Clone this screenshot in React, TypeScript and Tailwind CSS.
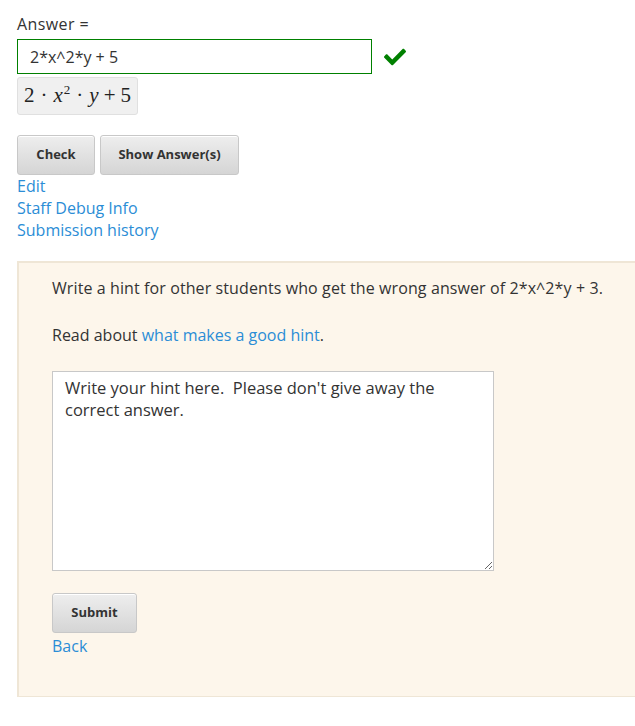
import { FaCheck } from "react-icons/fa";

const links = ["Edit", "Staff Debug Info", "Submission history"];

function GrayButton({ label, className = "" }: { label: string; className?: string }) {
  return (
    <button
      className={`h-10 rounded-[3px] border border-[#c8c8c8] bg-gradient-to-b from-[#eeeeee] to-[#d5d5d5] text-[13px] font-bold text-[#333] shadow-[inset_0_1px_0_#fff] ${className}`}
    >
      {label}
    </button>
  );
}

export default function App() {
  return (
    <div className="min-h-[726px] bg-white pt-[14px] font-['Open_Sans',sans-serif] text-[#333]">
      <div className="pl-[17px]">
        {/* Answer input */}
        <div className="text-[16px] leading-5 tracking-[0.4px]">Answer =</div>
        <div className="mt-[5px] flex items-center">
          <div className="flex h-[35px] w-[355px] items-center border border-[#008000] px-[12px] text-[16px]">
            2*x^2*y + 5
          </div>
          <FaCheck className="ml-[12px] text-[22px] text-[#008000]" />
        </div>
        <div className="mt-[3px] inline-flex h-[38px] items-center rounded-[3px] border border-[#e0e0e0] bg-[#f0f0f0] px-[6px] font-['Liberation_Serif',serif] text-[21px] text-[#222]">
          2<span className="mx-[6px]">·</span>
          <i>x</i>
          <sup className="ml-[1px] text-[13px] not-italic">2</sup>
          <span className="mx-[6px]">·</span>
          <i>y</i>
          <span className="mx-[5px]">+</span>5
        </div>

        {/* Actions */}
        <div className="mt-[20px] flex gap-[5px]">
          <GrayButton label="Check" className="w-[78px]" />
          <GrayButton label="Show Answer(s)" className="w-[139px]" />
        </div>
        <div className="flex flex-col text-[16px] leading-[22px] text-[#2b8dd6]">
          {links.map((l) => (
            <a key={l} href="#" className="w-fit">
              {l}
            </a>
          ))}
        </div>
      </div>

      {/* Hint panel */}
      <div className="ml-[17px] mt-[20px] h-[436px] border-l-2 border-t-2 border-b border-[#efe6d6] bg-[#fdf6eb] pl-[33px] pt-[14px]">
        <p className="text-[16px] leading-[22px] tracking-[0.1px]">
          Write a hint for other students who get the wrong answer of 2*x^2*y + 3.
        </p>
        <p className="mt-[25px] text-[16px] leading-[22px]">
          Read about <a href="#" className="text-[#2b8dd6]">what makes a good hint</a>.
        </p>
        <textarea
          className="mt-[25px] block h-[200px] w-[442px] resize-y border border-[#c8c8c8] bg-white px-[12px] py-[5px] text-[16.5px] leading-[22px] text-[#333] outline-none"
          defaultValue="Write your hint here.  Please don't give away the correct answer."
        />
        <GrayButton label="Submit" className="mt-[22px] w-[85px]" />
        <div className="mt-[2px] text-[16px] leading-[22px]">
          <a href="#" className="text-[#2b8dd6]">Back</a>
        </div>
      </div>
    </div>
  );
}
